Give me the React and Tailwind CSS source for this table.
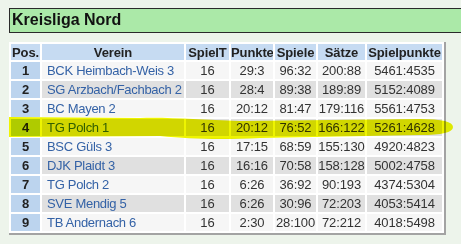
import React from "react";

const rows = [
  ["1", "BCK Heimbach-Weis 3", "16", "29:3", "96:32", "200:88", "5461:4535"],
  ["2", "SG Arzbach/Fachbach 2", "16", "28:4", "89:38", "189:89", "5152:4089"],
  ["3", "BC Mayen 2", "16", "20:12", "81:47", "179:116", "5561:4753"],
  ["4", "TG Polch 1", "16", "20:12", "76:52", "166:122", "5261:4628"],
  ["5", "BSC Güls 3", "16", "17:15", "68:59", "155:130", "4920:4823"],
  ["6", "DJK Plaidt 3", "16", "16:16", "70:58", "158:128", "5002:4758"],
  ["7", "TG Polch 2", "16", "6:26", "36:92", "90:193", "4374:5304"],
  ["8", "SVE Mendig 5", "16", "6:26", "30:96", "72:203", "4053:5414"],
  ["9", "TB Andernach 6", "16", "2:30", "28:100", "72:212", "4018:5498"],
];

const heads = [
  ["Pos.", "w-[29px]"],
  ["Verein", "w-[142px]"],
  ["SpielT", "w-[43px]"],
  ["Punkte", "w-[42px]"],
  ["Spiele", "w-[41px]"],
  ["Sätze", "w-[47px]"],
  ["Spielpunkte", "w-[75px]"],
];

function App() {
  return (
    <div
      className="relative w-[461px] h-[244px] overflow-hidden bg-[#edf4eb] pt-[8px] pl-[9px]"
      style={{ fontFamily: '"Liberation Sans", Arial, sans-serif' }}
    >
      <div className="h-[25px] w-[470px] border border-[#2b2b2b] bg-[#abe9a8] pl-[2px] text-[16px] font-bold leading-[22px] text-[#111]">
        Kreisliga Nord
      </div>

      <div className="mt-[9px] w-[437px] border-r-2 border-b-2 border-[#a3a3a3] bg-white">
        <table className="w-[435px] table-fixed border-separate border-spacing-[2px] text-[13px] leading-[15px] tracking-[-0.1px]">
          <thead>
            <tr className="h-[16px]">
              {heads.map(([h, w]) => (
                <th
                  key={h}
                  className={`${w} h-[16px] p-0 bg-[#c6dbf2] text-center font-bold text-[#222] overflow-hidden whitespace-nowrap`}
                >
                  {h}
                </th>
              ))}
            </tr>
          </thead>
          <tbody>
            {rows.map((r, i) => {
              const bg = i % 2 === 1 ? "bg-[#e0e0e0]" : "bg-[#f6f6f6]";
              return (
                <tr key={r[0]} className="h-[17px]">
                  <td className="h-[17px] p-0 bg-[#bcd4ee] text-center font-bold text-[#222]">
                    {r[0]}
                  </td>
                  <td className={`p-0 pl-[5px] ${bg} text-left text-[#3462a6] tracking-[-0.3px] whitespace-nowrap`}>
                    {r[1]}
                  </td>
                  {r.slice(2).map((c, j) => (
                    <td key={j} className={`p-0 ${bg} text-center text-[#333] whitespace-nowrap`}>
                      {c}
                    </td>
                  ))}
                </tr>
              );
            })}
          </tbody>
        </table>
      </div>

      <svg
        className="absolute left-0 top-0 pointer-events-none mix-blend-multiply"
        width="461"
        height="244"
      >
        <path
          d="M9,117 L140,118 C170,117 200,120 240,121 L420,119 Q453,119 453,127 Q453,135 420,135 L260,138 C220,140 190,139 160,136 L9,137 Z"
          fill="#eef400"
        />
      </svg>
    </div>
  );
}

export default App;
